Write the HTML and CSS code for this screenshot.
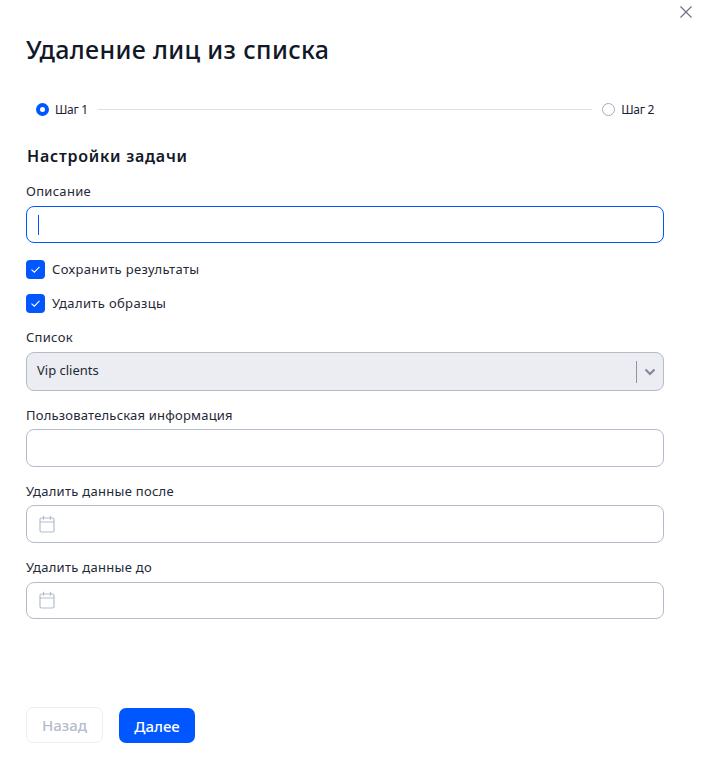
FILE: index.html
```html
<!DOCTYPE html>
<html lang="ru">
<head>
<meta charset="utf-8">
<title>Удаление лиц из списка</title>
<link rel="stylesheet" href="styles.css">
</head>
<body>
<main class="dialog">
  <button class="close" type="button" aria-label="Закрыть">
    <svg width="14" height="14" viewBox="0 0 14 14"><path d="M1.500 1.500l11 11M12.500 1.500l-11 11" fill="none" stroke="#6b7280" stroke-width="1.2"/></svg>
  </button>
  <h1 class="title">Удаление лиц из списка</h1>
  <div class="steps">
    <span class="radio radio-on"></span><span class="step-text">Шаг 1</span>
    <span class="step-line"></span>
    <span class="radio"></span><span class="step-text">Шаг 2</span>
  </div>
  <h2 class="section">Настройки задачи</h2>
  <label class="label first">Описание</label>
  <div class="input input-focus"><span class="caret"></span></div>
  <div class="check check-a">
    <span class="box"><svg width="11" height="9" viewBox="0 0 11 9"><path d="M1.500 4.600l2.800 2.600 5.200-5.400" fill="none" stroke="#fff" stroke-width="1.100"/></svg></span>
    <span class="check-text">Сохранить результаты</span>
  </div>
  <div class="check check-b">
    <span class="box"><svg width="11" height="9" viewBox="0 0 11 9"><path d="M1.500 4.600l2.800 2.600 5.200-5.400" fill="none" stroke="#fff" stroke-width="1.100"/></svg></span>
    <span class="check-text">Удалить образцы</span>
  </div>
  <label class="label">Список</label>
  <div class="input select">
    <span class="select-value">Vip clients</span>
    <span class="select-sep"></span>
    <svg class="chevron" width="12" height="8" viewBox="0 0 12 8"><path d="M1.500 1.500L6 6l4.500-4.500" fill="none" stroke="#7f8798" stroke-width="2"/></svg>
  </div>
  <label class="label label-long">Пользовательская информация</label>
  <div class="input"></div>
  <label class="label">Удалить данные после</label>
  <div class="input date">
    <svg width="16" height="18" viewBox="0 0 16 18"><g fill="none" stroke="#b4bccb" stroke-width="1.2"><rect x="1" y="3" width="14" height="14" rx="1.500"/><path d="M1 7h14M4.500 .8v4M11.500 .8v4"/></g></svg>
  </div>
  <label class="label">Удалить данные до</label>
  <div class="input date date-last">
    <svg width="16" height="18" viewBox="0 0 16 18"><g fill="none" stroke="#b4bccb" stroke-width="1.2"><rect x="1" y="3" width="14" height="14" rx="1.500"/><path d="M1 7h14M4.500 .8v4M11.500 .8v4"/></g></svg>
  </div>
  <div class="actions">
    <button class="btn btn-back" type="button">Назад</button>
    <button class="btn btn-next" type="button">Далее</button>
  </div>
</main>
</body>
</html>
```

FILE: styles.css
```css
* { box-sizing: border-box; }
html, body { margin: 0; padding: 0; background: #fff; }
body { font-family: "Noto Sans", "Open Sans", sans-serif; color: #1a2233; }
.dialog { position: relative; width: 704px; height: 760px; padding: 33px 40px 0 26px; display: flex; flex-direction: column; overflow: hidden; }
.close { position: absolute; left: 679px; top: 5px; width: 14px; height: 14px; padding: 0; border: 0; background: none; display: block; }
.close svg { display: block; }
.title { margin: 0; font-size: 25px; line-height: 32px; font-weight: 500; letter-spacing: .35px; color: #111827; }
.steps { display: flex; align-items: center; height: 20px; margin-top: 34px; padding: 0 10px; }
.radio { width: 13px; height: 13px; flex: none; border-radius: 50%; border: 1px solid #a3abbb; background: #fff; }
.radio-on { border: 4px solid #0057ff; }
.step-text { margin-left: 6px; font-size: 12px; line-height: 20px; letter-spacing: -.3px; color: #1a2233; position: relative; top: 1px; }
.step-line { flex: 1; height: 1px; margin: 0 10px; background: #dcdfe8; }
.section { margin: 26px 0 0 1px; font-size: 16px; line-height: 22px; font-weight: 600; letter-spacing: .75px; color: #111827; }
.label { display: block; margin-top: 14px; font-size: 13px; line-height: 20px; letter-spacing: .28px; color: #1f2937; }
.label-long { letter-spacing: .2px; }
.input { height: 38px; margin-top: 4px; border: 1px solid #b4bccb; border-radius: 8px; background: #fff; display: flex; align-items: center; }
.input-focus { height: 37px; margin-top: 5px; border-color: #0057ff; padding-left: 11px; }
.date-last { height: 37px; margin-top: 5px; }
.caret { width: 1px; height: 20px; background: #0057ff; }
.check { display: flex; align-items: center; gap: 7px; height: 19px; }
.check-a { margin-top: 17px; }
.check-b { margin-top: 15px; }
.box { width: 19px; height: 19px; border-radius: 4px; background: #0057ff; display: flex; align-items: center; justify-content: center; }
.check-text { font-size: 13px; line-height: 19px; letter-spacing: .36px; color: #1f2937; }
.select { height: 39px; margin-top: 5px; background: #ebedf2; padding: 0 7px 0 10px; }
.select-value { flex: 1; font-size: 13px; line-height: 18px; margin-top: -3px; color: #1f2937; }
.select-sep { width: 1px; height: 22px; background: #8d95a8; margin-right: 7px; }
.chevron { display: block; }
.date { padding-left: 12px; }
.date svg { display: block; margin-top: -1px; }
.actions { display: flex; gap: 16px; margin-top: 88px; }
.btn { height: 36px; border-radius: 7px; font-family: inherit; font-size: 15px; font-weight: 500; padding: 0; }
.btn-back { width: 77px; border: 1px solid #eceef2; background: #fff; color: #b4bccb; }
.btn-next { width: 76px; height: 35px; align-self: flex-end; border: 0; background: #0057ff; color: #fff; }
```
